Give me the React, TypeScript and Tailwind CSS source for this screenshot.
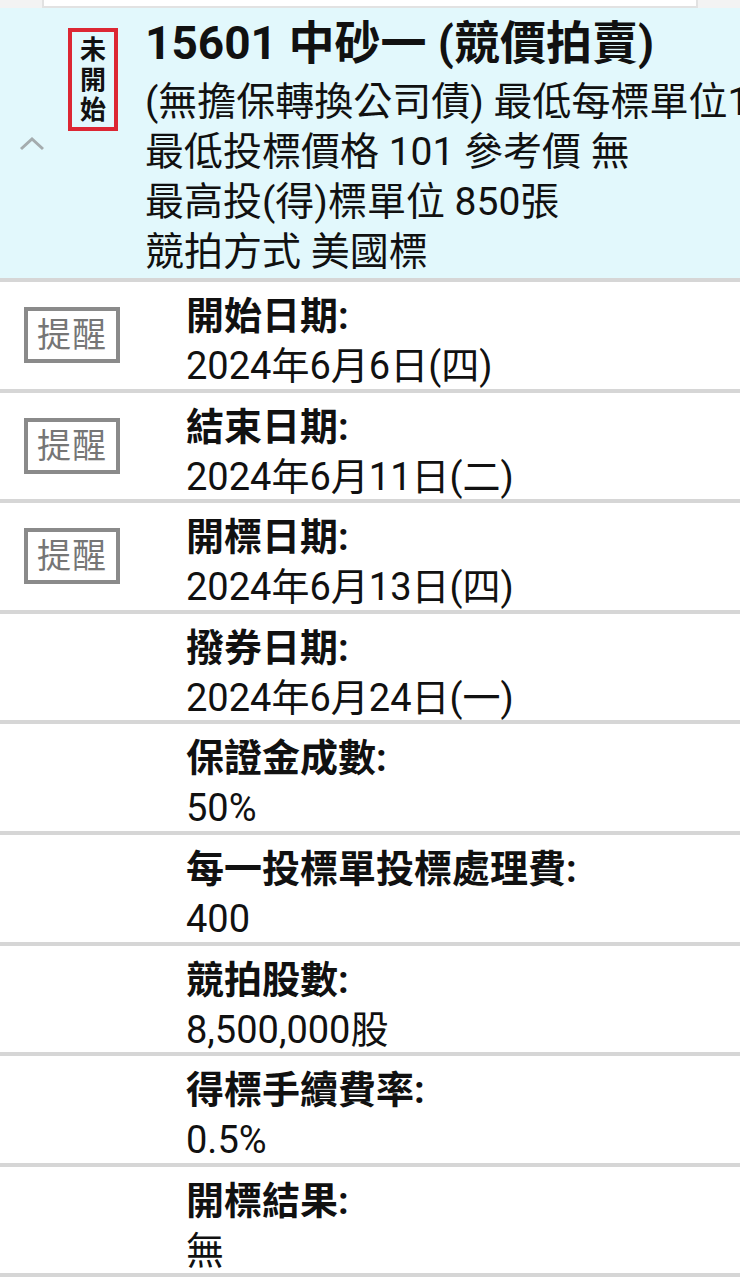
import React from "react";

const rows: { label: string; value: string; remind?: boolean }[] = [
  { label: "開始日期:", value: "2024年6月6日(四)", remind: true },
  { label: "結束日期:", value: "2024年6月11日(二)", remind: true },
  { label: "開標日期:", value: "2024年6月13日(四)", remind: true },
  { label: "撥券日期:", value: "2024年6月24日(一)" },
  { label: "保證金成數:", value: "50%" },
  { label: "每一投標單投標處理費:", value: "400" },
  { label: "競拍股數:", value: "8,500,000股" },
  { label: "得標手續費率:", value: "0.5%" },
  { label: "開標結果:", value: "無" },
];

function RemindButton() {
  return (
    <div className="w-[96px] h-[56px] border-4 border-[#8a8a8a] bg-white flex items-center justify-center">
      <span className="text-[34px] leading-none text-[#767676] tracking-[1px]">提醒</span>
    </div>
  );
}

function DetailRow({ label, value, remind }: { label: string; value: string; remind?: boolean }) {
  return (
    <div className="h-[110.6px] border-b-4 border-[#d6d6d6] bg-white flex">
      <div className="w-[186px] shrink-0 flex items-center pl-[24px]">
        {remind && <RemindButton />}
      </div>
      <div className="pt-[9px] text-[38px] leading-[50px] text-[#111] whitespace-nowrap">
        <div className="font-bold">{label}</div>
        <div>{value}</div>
      </div>
    </div>
  );
}

export default function App() {
  return (
    <div className="w-[740px] h-[1280px] overflow-hidden bg-white font-[Roboto,'Noto_Sans_CJK_TC',sans-serif]">
      {/* previous card edge */}
      <div className="h-[8px] bg-[#f3f3f3] px-[42px]">
        <div className="h-full bg-white border-x-2 border-b-2 border-[#e2e2e2]" />
      </div>

      {/* auction header */}
      <div className="h-[274px] border-b-4 border-[#d6d6d6] bg-[#e2f8fc] flex overflow-hidden">
        <div className="w-[64px] shrink-0 flex items-center justify-center">
          <svg width="26" height="14" viewBox="0 0 26 14" className="mt-[2px]">
            <polyline points="2,12 13,2 24,12" fill="none" stroke="#a4acae" strokeWidth="3" />
          </svg>
        </div>
        <div className="w-[81px] shrink-0 pt-[20px] pl-[4px]">
          <div className="w-[50px] h-[103px] border-4 border-[#dc2733] flex flex-col items-center justify-center text-[26px] leading-[30px] font-bold text-[#111]">
            <span>未</span>
            <span>開</span>
            <span>始</span>
          </div>
        </div>
        <div className="flex-1 min-w-0 pt-[12px] whitespace-nowrap overflow-hidden text-[#111]">
          <div className="text-[46px] leading-[46px] font-bold">15601 中砂一 (競價拍賣)</div>
          <div className="mt-[11px] text-[39px] leading-[50px]">
            <div>(無擔保轉換公司債) 最低每標單位1000張</div>
            <div>最低投標價格 101 參考價 無</div>
            <div>最高投(得)標單位 850張</div>
            <div>競拍方式 美國標</div>
          </div>
        </div>
      </div>

      {rows.map((r) => (
        <DetailRow key={r.label} {...r} />
      ))}
    </div>
  );
}
